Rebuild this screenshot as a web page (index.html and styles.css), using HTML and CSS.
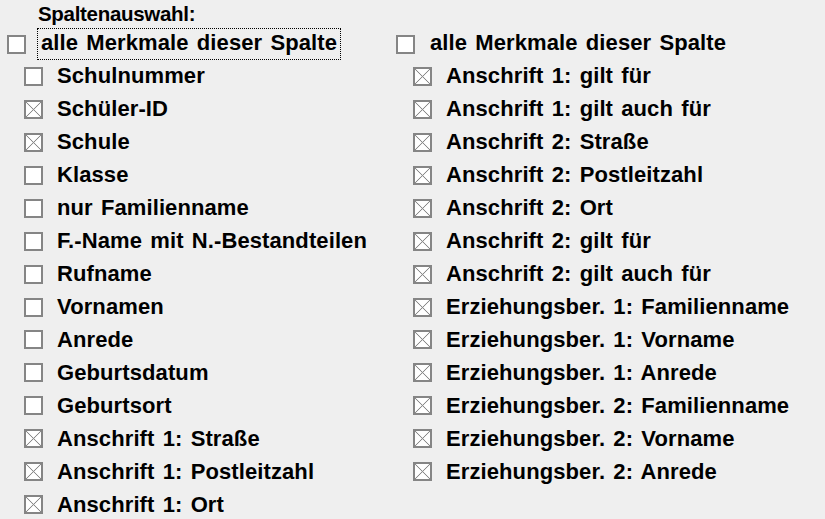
FILE: index.html
```html
<!DOCTYPE html>
<html lang="de">
<head>
  <meta charset="UTF-8" />
  <meta name="viewport" content="width=device-width, initial-scale=1.0" />
  <title>Spaltenauswahl</title>
  <link rel="stylesheet" href="styles.css">
</head>
<body>
  <div class="title">Spaltenauswahl:</div>
  <div class="columns">
    <div class="column">
      <div class="row all"><span class="box"></span><span class="label focus">alle Merkmale dieser Spalte</span></div>
      <div class="row"><span class="box"></span><span class="label">Schulnummer</span></div>
      <div class="row"><span class="box checked"></span><span class="label">Schüler-ID</span></div>
      <div class="row"><span class="box checked"></span><span class="label">Schule</span></div>
      <div class="row"><span class="box"></span><span class="label">Klasse</span></div>
      <div class="row"><span class="box"></span><span class="label">nur Familienname</span></div>
      <div class="row"><span class="box"></span><span class="label">F.-Name mit N.-Bestandteilen</span></div>
      <div class="row"><span class="box"></span><span class="label">Rufname</span></div>
      <div class="row"><span class="box"></span><span class="label">Vornamen</span></div>
      <div class="row"><span class="box"></span><span class="label">Anrede</span></div>
      <div class="row"><span class="box"></span><span class="label">Geburtsdatum</span></div>
      <div class="row"><span class="box"></span><span class="label">Geburtsort</span></div>
      <div class="row"><span class="box checked"></span><span class="label">Anschrift 1: Straße</span></div>
      <div class="row"><span class="box checked"></span><span class="label">Anschrift 1: Postleitzahl</span></div>
      <div class="row"><span class="box checked"></span><span class="label">Anschrift 1: Ort</span></div>
    </div>
    <div class="column">
      <div class="row all"><span class="box"></span><span class="label">alle Merkmale dieser Spalte</span></div>
      <div class="row"><span class="box checked"></span><span class="label">Anschrift 1: gilt für</span></div>
      <div class="row"><span class="box checked"></span><span class="label">Anschrift 1: gilt auch für</span></div>
      <div class="row"><span class="box checked"></span><span class="label">Anschrift 2: Straße</span></div>
      <div class="row"><span class="box checked"></span><span class="label">Anschrift 2: Postleitzahl</span></div>
      <div class="row"><span class="box checked"></span><span class="label">Anschrift 2: Ort</span></div>
      <div class="row"><span class="box checked"></span><span class="label">Anschrift 2: gilt für</span></div>
      <div class="row"><span class="box checked"></span><span class="label">Anschrift 2: gilt auch für</span></div>
      <div class="row"><span class="box checked"></span><span class="label">Erziehungsber. 1: Familienname</span></div>
      <div class="row"><span class="box checked"></span><span class="label">Erziehungsber. 1: Vorname</span></div>
      <div class="row"><span class="box checked"></span><span class="label">Erziehungsber. 1: Anrede</span></div>
      <div class="row"><span class="box checked"></span><span class="label">Erziehungsber. 2: Familienname</span></div>
      <div class="row"><span class="box checked"></span><span class="label">Erziehungsber. 2: Vorname</span></div>
      <div class="row"><span class="box checked"></span><span class="label">Erziehungsber. 2: Anrede</span></div>
    </div>
  </div>
</body>
</html>
```

FILE: styles.css
```css
body {
  margin: 0;
  background-color: #efefef;
  font-family: "Liberation Sans", Arial, sans-serif;
  font-weight: bold;
  color: #000;
  overflow: hidden;
}
.title {
  height: 28px;
  line-height: 28px;
  padding-left: 38px;
  font-size: 20.5px;
  letter-spacing: -0.3px;
}
.columns {
  display: grid;
  grid-template-columns: 389px 1fr;
  padding-left: 7px;
}
.row {
  display: flex;
  align-items: center;
  height: 32.95px;
  padding-left: 17px;
  font-size: 22px;
  letter-spacing: 0.1px;
  word-spacing: 2px;
}
.row.all {
  height: 32px;
  padding-left: 0;
}
.box {
  flex: none;
  width: 15px;
  height: 15px;
  border: 2px solid #858585;
  background-color: #fff;
  margin-right: 14px;
}
.box.checked {
  background:
    linear-gradient(45deg, transparent calc(50% - 0.8px), #8a8a8a 50%, transparent calc(50% + 0.8px)),
    linear-gradient(-45deg, transparent calc(50% - 0.8px), #8a8a8a 50%, transparent calc(50% + 0.8px)),
    #fff;
}
.row.all .box {
  margin-right: 11px;
}
.row.all .label {
  border: 1px dotted transparent;
  padding: 1px 3px 3px 3px;
}
.row.all .label.focus {
  border-color: #000;
}
```
